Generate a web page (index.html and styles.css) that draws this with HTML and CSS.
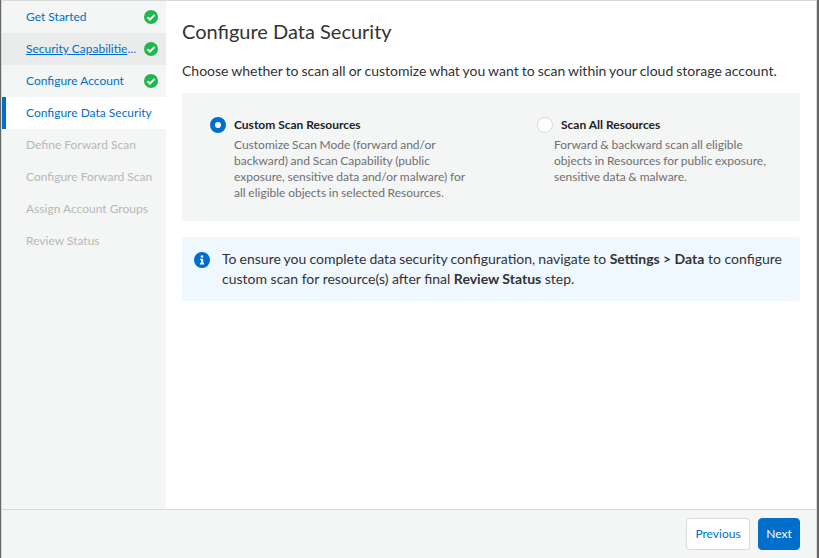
FILE: index.html
```html
<!DOCTYPE html>
<html lang="en">
<head>
<meta charset="utf-8">
<title>Configure Data Security</title>
<link rel="stylesheet" href="styles.css">
</head>
<body>
<svg class="defs" aria-hidden="true">
  <symbol id="check" viewBox="0 0 14 14"><circle cx="7" cy="7" r="7" fill="#1fb84c"/><path d="M3.5 7.2 6 9.6 10.6 4.9" fill="none" stroke="#fff" stroke-width="1.9"/></symbol>
</svg>
<div class="dialog">
  <div class="body">
    <nav class="steps">
      <a class="step"><span class="label">Get Started</span><svg class="check"><use href="#check"/></svg></a>
      <a class="step hover"><span class="label"><u>Security Capabilitie</u>...</span><svg class="check"><use href="#check"/></svg></a>
      <a class="step"><span class="label">Configure Account</span><svg class="check"><use href="#check"/></svg></a>
      <a class="step active"><span class="label">Configure Data Security</span></a>
      <a class="step disabled"><span class="label">Define Forward Scan</span></a>
      <a class="step disabled"><span class="label">Configure Forward Scan</span></a>
      <a class="step disabled"><span class="label">Assign Account Groups</span></a>
      <a class="step disabled"><span class="label">Review Status</span></a>
    </nav>
    <main class="content">
      <h1>Configure Data Security</h1>
      <p class="intro">Choose whether to scan all or customize what you want to scan within your cloud storage account.</p>
      <section class="options">
        <div class="option">
          <div class="choice"><span class="radio selected"></span><span class="name">Custom Scan Resources</span></div>
          <p class="detail">Customize Scan Mode (forward and/or<br>backward) and Scan Capability (public<br>exposure, sensitive data and/or malware) for<br>all eligible objects in selected Resources.</p>
        </div>
        <div class="option second">
          <div class="choice"><span class="radio"></span><span class="name">Scan All Resources</span></div>
          <p class="detail">Forward &amp; backward scan all eligible<br>objects in Resources for public exposure,<br>sensitive data &amp; malware.</p>
        </div>
      </section>
      <section class="notice">
        <svg class="info" viewBox="0 0 16 16"><circle cx="8" cy="8" r="8" fill="#006fcc"/><path d="M6.8 3.4h2.4v2.2H6.8zM6 6.7h3.2v4.2H10v1.5H6v-1.5h.9V8.1H6z" fill="#fff"/></svg>
        <p><span class="tight">To ensure you complete data security configuration, navigate to</span> <b>Settings &gt; Data</b> to configure<br>custom scan for resource(s) after final <b>Review Status</b> step.</p>
      </section>
    </main>
  </div>
  <footer class="footer">
    <button class="btn">Previous</button>
    <button class="btn primary">Next</button>
  </footer>
</div>
</body>
</html>
```
FILE: styles.css
```css
* { box-sizing: border-box; }
body {
  margin: 0;
  height: 558px;
  border-left: 1px solid #666;
  border-right: 2px solid #666;
  font-family: Lato, sans-serif;
  font-size: 14px;
  color: #333;
  background: #fff;
  overflow: hidden;
}
.defs { display: none; }
h1, p { margin: 0; font-weight: 400; white-space: nowrap; }
.dialog {
  height: 558px;
  border: 1px solid #d9d9d9;
  border-bottom: 0;
  display: flex;
  flex-direction: column;
}
.body { flex: 1; display: flex; }
.steps { flex: none; width: 164px; background: #f4f5f5; }
.step {
  height: 32px;
  display: flex;
  align-items: center;
  justify-content: space-between;
  padding: 0 8px 0 24px;
  font-size: 12px;
  color: #006fcc;
  white-space: nowrap;
}
.step.hover { background: #eaebeb; }
.step.active { background: #fff; border-left: 4px solid #006fcc; padding: 0 0 0 20px; }
.step.disabled { color: #b8b8b8; }
.label { padding-bottom: 2px; }
.check { width: 14px; height: 14px; }
.content { flex: 1; min-width: 0; padding: 14px 16px 0; }
h1 { font-size: 20px; line-height: 32px; }
.intro { margin-top: 14px; line-height: 20px; word-spacing: -0.53px; }
.options {
  margin-top: 12px;
  height: 128px;
  padding: 24px 28px;
  background: #f4f5f5;
  display: flex;
}
.option { width: 320px; flex: none; }
.option.second { width: 240px; padding-left: 7px; }
.choice { display: flex; align-items: center; height: 16px; }
.radio { width: 16px; height: 16px; border-radius: 50%; border: 1px solid #d9d9d9; background: #fff; }
.radio.selected { border: 5px solid #006fcc; }
.name { margin-left: 8px; padding-bottom: 2px; font-size: 12px; font-weight: 700; color: #222; }
.detail { margin: 4px 0 0 24px; font-size: 12px; line-height: 16px; color: #707070; word-spacing: -0.35px; }
.second .detail { margin-left: 17px; }
.notice {
  margin-top: 16px;
  height: 64px;
  padding: 12px;
  border-radius: 4px;
  background: #eff7ff;
  display: flex;
  line-height: 20px;
}
.tight { word-spacing: -0.5px; }
.info { width: 16px; height: 16px; margin: 3px 12px 0 0; }
.footer {
  height: 49px;
  border-top: 1px solid #d9d9d9;
  background: #f4f5f5;
  display: flex;
  justify-content: flex-end;
  padding: 8px 16px;
  gap: 8px;
}
.btn {
  width: 64px;
  height: 32px;
  padding: 0 0 2px;
  border: 1px solid #d9d9d9;
  border-radius: 4px;
  background: #fff;
  color: #006fcc;
  font: 12px Lato, sans-serif;
}
.btn.primary { width: 42px; background: #006fcc; border-color: #006fcc; color: #fff; }
```
